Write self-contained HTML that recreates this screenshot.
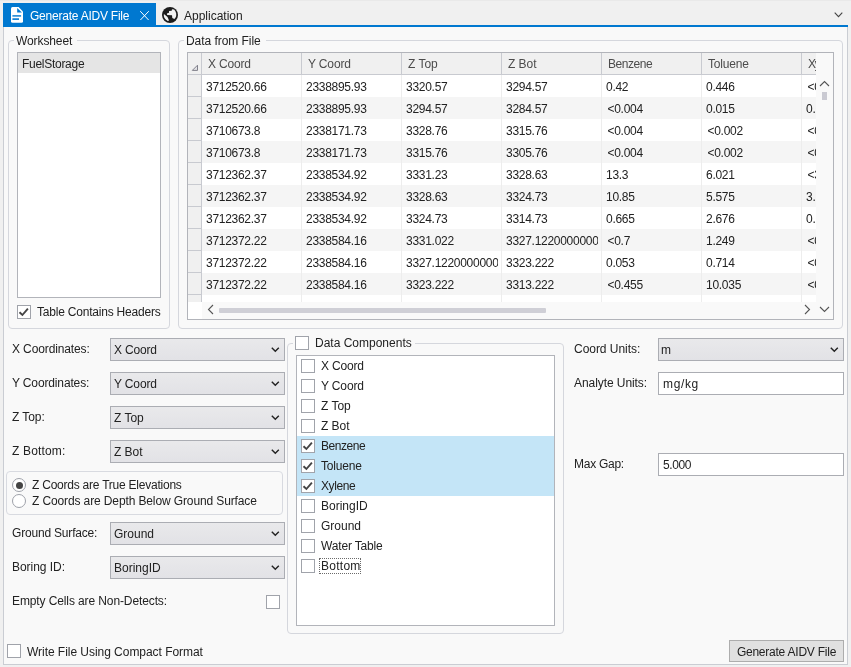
<!DOCTYPE html>
<html><head><meta charset="utf-8"><title>Generate AIDV File</title>
<style>
html,body{margin:0;padding:0}
body{width:851px;height:667px;overflow:hidden;position:relative;background:#f0f0f0;will-change:transform;font-family:"Liberation Sans",sans-serif;font-size:12px;color:#222}
div{box-sizing:border-box}
i{font-style:normal}
.abs,.lab,.cb,.combo,.tbx,.grp,.glab{position:absolute}
.lab{white-space:nowrap;line-height:14px;height:14px}
.cb{width:14px;height:14px;border:1px solid #a0a3aa;background:#fff}
.cb .ck{position:absolute;left:-1px;top:-1px}
.combo{height:23px;border:1px solid #abadb3;background:linear-gradient(#e9e9eb,#e2e2e6)}
.combo span{position:absolute;left:3px;top:4px;line-height:14px;white-space:nowrap}
.combo .ar{position:absolute;right:4.2px;top:8.3px}
.tbx{height:23px;border:1px solid #abadb3;background:#fff}
.tbx span{position:absolute;left:4px;top:4px;line-height:14px;white-space:nowrap}
.grp{border:1px solid #d5d7dd;border-radius:4px}
.glab{background:#f9f9f9;padding:0 5px 0 2px;line-height:14px;white-space:nowrap}
.hc{position:absolute;top:0;height:22px;border-right:1px solid #c8cad0;border-bottom:1px solid #c8cad0;background:#f0f0f0;color:#4c4c4c;line-height:22px;padding-left:6px;white-space:nowrap;overflow:hidden}
.row{position:absolute;left:0;width:630px;height:22px}
.row.alt{background:#f5f5f5}
.rh{position:absolute;left:0;top:0;width:14px;height:22px;background:#f0f0f0;border-right:1px solid #c8cad0;border-bottom:1px solid #c8cad0}
.c{position:absolute;top:0;height:22px;line-height:22px;padding-left:4px;padding-top:0.5px;white-space:nowrap;overflow:hidden;letter-spacing:-0.28px}
.vl{position:absolute;top:22px;width:1px;height:230px;background:#ededed}
.li{position:absolute;left:0;width:257px;height:20px}
.li.sel{background:#c4e5f7}
.li span{position:absolute;left:24px;top:3px;line-height:14px;white-space:nowrap}
.li .fr{position:absolute;left:22px;top:2px;width:42px;height:16px;border:1px dotted #6a6a6a}
</style></head><body>

<div class="abs" style="left:0;top:0;width:851px;height:1px;background:#e9e9e9"></div>
<div class="abs" style="left:3px;top:27px;width:845px;height:638px;background:#f9f9f9;border:1px solid #cacdd3;border-top:none"></div>
<div class="abs" style="left:3px;top:25px;width:845px;height:2px;background:#0078d0"></div>
<div class="abs" style="left:3px;top:3px;width:153px;height:24px;background:#0078d0"></div>
<svg style="position:absolute;left:11px;top:7px" width="12" height="16" viewBox="0 0 12 16"><path d="M1.5 0 H7.6 L12 4.4 V14.3 Q12 15.8 10.5 15.8 H1.5 Q0 15.8 0 14.3 V1.5 Q0 0 1.5 0 Z" fill="#fff"/><path d="M6.2 1 V5.6 H10.9 Z" fill="#0078d0"/><rect x="1.4" y="8.2" width="8.7" height="1.4" fill="#0078d0"/><rect x="1.4" y="11.3" width="6.6" height="1.6" fill="#0078d0"/></svg>
<div class="lab" style="color:#fff;left:30px;top:9px"><i style="letter-spacing:-0.23px">Generate AIDV File</i></div>
<svg style="position:absolute;left:140px;top:11px" width="9" height="9.4" viewBox="0 0 9 9.4"><path d="M0.2 0.2 L8.8 9.2 M8.8 0.2 L0.2 9.2" stroke="#fff" stroke-width="1" fill="none"/></svg>
<svg style="position:absolute;left:162px;top:7px" width="16" height="16" viewBox="0 0 16 16"><circle cx="8" cy="8" r="8" fill="#1c1c1c"/><path d="M10 2.2 L12.1 2.6 Q13.7 4.2 14.2 6.5 Q14.5 8.6 13.6 10.6 L12.4 12.1 L10.3 10.9 L10 8.2 L5.2 7.9 L4.9 6.4 L7 5.8 L7 4 L9.7 3.7 Z" fill="#f2f2f2"/><path d="M1.9 7 L3.1 7.9 L5.5 10 L7 13.6 L5.8 13.9 Q4.2 13.2 3.2 12 Q2 10.5 1.8 9 Z" fill="#f2f2f2"/></svg>
<div class="lab " style="left:184px;top:9px"><i style="letter-spacing:0.00px">Application</i></div>
<svg style="position:absolute;left:834px;top:12px" width="9" height="6" viewBox="0 0 9 6"><path d="M0.7 0.7 L4.5 4.6 L8.3 0.7" fill="none" stroke="#444" stroke-width="1.1"/></svg>
<div class="grp" style="left:8px;top:40px;width:162px;height:289px"></div>
<div class="glab" style="left:14px;top:34px"><i style="letter-spacing:-0.10px">Worksheet</i></div>
<div class="abs" style="left:17px;top:52px;width:144px;height:246px;border:1px solid #b2b4ba;background:#fff"><div class="abs" style="left:0;top:0;width:142px;height:20px;background:#e5e5e5"></div><div class="lab" style="left:4px;top:4px"><i style="letter-spacing:-0.28px">FuelStorage</i></div></div>
<div class="cb" style="left:17px;top:305px"><svg class="ck" viewBox="0 0 14 14" width="14" height="14"><path d="M2.5 7.3 L5.4 10 L10.9 3.7" fill="none" stroke="#444" stroke-width="1.9"/></svg></div>
<div class="lab " style="left:37px;top:305px"><i style="letter-spacing:-0.21px">Table Contains Headers</i></div>
<div class="grp" style="left:178px;top:40px;width:665px;height:289px"></div>
<div class="glab" style="left:184px;top:34px"><i style="letter-spacing:-0.05px">Data from File</i></div>
<div class="abs" style="left:187px;top:52px;width:647px;height:268px;border:1px solid #b2b4ba;background:#fff;overflow:hidden"><div class="abs" style="left:0;top:0;width:628px;height:249px;overflow:hidden"><div class="hc" style="left:0;width:14px;padding:0"></div><div class="hc" style="left:14px;width:100px"><i style="letter-spacing:-0.17px">X Coord</i></div><div class="hc" style="left:114px;width:100px"><i style="letter-spacing:-0.14px">Y Coord</i></div><div class="hc" style="left:214px;width:100px"><i style="letter-spacing:0.00px">Z Top</i></div><div class="hc" style="left:314px;width:100px"><i style="letter-spacing:-0.05px">Z Bot</i></div><div class="hc" style="left:414px;width:100px"><i style="letter-spacing:-0.46px">Benzene</i></div><div class="hc" style="left:514px;width:100px"><i style="letter-spacing:-0.17px">Toluene</i></div><div class="hc" style="left:614px;width:30px"><i style="letter-spacing:-1.30px">Xy</i></div><div class="row" style="top:22px"><div class="rh"></div><div class="c" style="left:14px;width:96px">3712520.66</div><div class="c" style="left:114px;width:96px">2338895.93</div><div class="c" style="left:214px;width:96px">3320.57</div><div class="c" style="left:314px;width:96px">3294.57</div><div class="c" style="left:414px;width:96px">0.42</div><div class="c" style="left:514px;width:96px">0.446</div><div class="c" style="left:614px;width:26px;padding-left:5.5px">&lt;0</div></div><div class="row alt" style="top:44px"><div class="rh"></div><div class="c" style="left:14px;width:96px">3712520.66</div><div class="c" style="left:114px;width:96px">2338895.93</div><div class="c" style="left:214px;width:96px">3294.57</div><div class="c" style="left:314px;width:96px">3284.57</div><div class="c" style="left:414px;width:96px;padding-left:5.5px">&lt;0.004</div><div class="c" style="left:514px;width:96px">0.015</div><div class="c" style="left:614px;width:26px">0.0</div></div><div class="row" style="top:66px"><div class="rh"></div><div class="c" style="left:14px;width:96px">3710673.8</div><div class="c" style="left:114px;width:96px">2338171.73</div><div class="c" style="left:214px;width:96px">3328.76</div><div class="c" style="left:314px;width:96px">3315.76</div><div class="c" style="left:414px;width:96px;padding-left:5.5px">&lt;0.004</div><div class="c" style="left:514px;width:96px;padding-left:5.5px">&lt;0.002</div><div class="c" style="left:614px;width:26px;padding-left:5.5px">&lt;0</div></div><div class="row alt" style="top:88px"><div class="rh"></div><div class="c" style="left:14px;width:96px">3710673.8</div><div class="c" style="left:114px;width:96px">2338171.73</div><div class="c" style="left:214px;width:96px">3315.76</div><div class="c" style="left:314px;width:96px">3305.76</div><div class="c" style="left:414px;width:96px;padding-left:5.5px">&lt;0.004</div><div class="c" style="left:514px;width:96px;padding-left:5.5px">&lt;0.002</div><div class="c" style="left:614px;width:26px;padding-left:5.5px">&lt;0</div></div><div class="row" style="top:110px"><div class="rh"></div><div class="c" style="left:14px;width:96px">3712362.37</div><div class="c" style="left:114px;width:96px">2338534.92</div><div class="c" style="left:214px;width:96px">3331.23</div><div class="c" style="left:314px;width:96px">3328.63</div><div class="c" style="left:414px;width:96px">13.3</div><div class="c" style="left:514px;width:96px">6.021</div><div class="c" style="left:614px;width:26px;padding-left:5.5px">&lt;3</div></div><div class="row alt" style="top:132px"><div class="rh"></div><div class="c" style="left:14px;width:96px">3712362.37</div><div class="c" style="left:114px;width:96px">2338534.92</div><div class="c" style="left:214px;width:96px">3328.63</div><div class="c" style="left:314px;width:96px">3324.73</div><div class="c" style="left:414px;width:96px">10.85</div><div class="c" style="left:514px;width:96px">5.575</div><div class="c" style="left:614px;width:26px">3.2</div></div><div class="row" style="top:154px"><div class="rh"></div><div class="c" style="left:14px;width:96px">3712362.37</div><div class="c" style="left:114px;width:96px">2338534.92</div><div class="c" style="left:214px;width:96px">3324.73</div><div class="c" style="left:314px;width:96px">3314.73</div><div class="c" style="left:414px;width:96px">0.665</div><div class="c" style="left:514px;width:96px">2.676</div><div class="c" style="left:614px;width:26px">0.0</div></div><div class="row alt" style="top:176px"><div class="rh"></div><div class="c" style="left:14px;width:96px">3712372.22</div><div class="c" style="left:114px;width:96px">2338584.16</div><div class="c" style="left:214px;width:96px">3331.022</div><div class="c" style="left:314px;width:96px">3327.12200000001</div><div class="c" style="left:414px;width:96px;padding-left:5.5px">&lt;0.7</div><div class="c" style="left:514px;width:96px">1.249</div><div class="c" style="left:614px;width:26px;padding-left:5.5px">&lt;0</div></div><div class="row" style="top:198px"><div class="rh"></div><div class="c" style="left:14px;width:96px">3712372.22</div><div class="c" style="left:114px;width:96px">2338584.16</div><div class="c" style="left:214px;width:96px">3327.12200000001</div><div class="c" style="left:314px;width:96px">3323.222</div><div class="c" style="left:414px;width:96px">0.053</div><div class="c" style="left:514px;width:96px">0.714</div><div class="c" style="left:614px;width:26px;padding-left:5.5px">&lt;0</div></div><div class="row alt" style="top:220px"><div class="rh"></div><div class="c" style="left:14px;width:96px">3712372.22</div><div class="c" style="left:114px;width:96px">2338584.16</div><div class="c" style="left:214px;width:96px">3323.222</div><div class="c" style="left:314px;width:96px">3313.222</div><div class="c" style="left:414px;width:96px;padding-left:5.5px">&lt;0.455</div><div class="c" style="left:514px;width:96px">10.035</div><div class="c" style="left:614px;width:26px;padding-left:5.5px">&lt;0</div></div><div class="row" style="top:242px"><div class="rh"></div><div class="c" style="left:14px;width:96px"></div><div class="c" style="left:114px;width:96px"></div><div class="c" style="left:214px;width:96px"></div><div class="c" style="left:314px;width:96px"></div><div class="c" style="left:414px;width:96px"></div><div class="c" style="left:514px;width:96px"></div><div class="c" style="left:614px;width:26px"></div></div><div class="vl" style="left:113px"></div><div class="vl" style="left:213px"></div><div class="vl" style="left:313px"></div><div class="vl" style="left:413px"></div><div class="vl" style="left:513px"></div><div class="vl" style="left:613px"></div></div><div class="abs" style="left:628px;top:0;width:17px;height:266px;background:#f9f9f9"></div><div class="abs" style="left:14px;top:249px;width:631px;height:17px;background:#f9f9f9"></div><div class="abs" style="left:31px;top:255px;width:327px;height:5px;background:#cfcfd6;border-radius:1px"></div><div class="abs" style="left:634px;top:39px;width:5px;height:8px;background:#cacad2"></div><svg style="position:absolute;left:630.7px;top:26.6px" width="11" height="7" viewBox="0 0 11 7"><path d="M1 6 L5.5 1.5 L10 6" fill="none" stroke="#555" stroke-width="1.1"/></svg><svg style="position:absolute;left:630.6px;top:253px" width="11" height="7" viewBox="0 0 11 7"><path d="M1 1 L5.5 5.5 L10 1" fill="none" stroke="#555" stroke-width="1.1"/></svg><svg style="position:absolute;left:19px;top:251.2px" width="7" height="11" viewBox="0 0 7 11"><path d="M6 1 L1.5 5.5 L6 10" fill="none" stroke="#555" stroke-width="1.1"/></svg><svg style="position:absolute;left:616px;top:251.2px" width="7" height="11" viewBox="0 0 7 11"><path d="M1 1 L5.5 5.5 L1 10" fill="none" stroke="#555" stroke-width="1.1"/></svg><svg style="position:absolute;left:0;top:0" width="14" height="22" viewBox="0 0 14 22"><path d="M9.5 12.2 V17.4 H4.3 Z" fill="#e2e2e6" stroke="#80808a" stroke-width="1"/></svg></div>
<div class="lab " style="left:12px;top:342px"><i style="letter-spacing:-0.12px">X Coordinates:</i></div>
<div class="combo" style="left:110px;top:338px;width:175px"><span><i style="letter-spacing:-0.17px">X Coord</i></span><svg class="ar" viewBox="0 0 9 6" width="8.6" height="5.7"><path d="M0.8 0.8 L4.5 4.5 L8.2 0.8" fill="none" stroke="#222" stroke-width="1.5"/></svg></div>
<div class="lab " style="left:12px;top:376px"><i style="letter-spacing:-0.14px">Y Coordinates:</i></div>
<div class="combo" style="left:110px;top:372px;width:175px"><span><i style="letter-spacing:-0.14px">Y Coord</i></span><svg class="ar" viewBox="0 0 9 6" width="8.6" height="5.7"><path d="M0.8 0.8 L4.5 4.5 L8.2 0.8" fill="none" stroke="#222" stroke-width="1.5"/></svg></div>
<div class="lab " style="left:12px;top:410px"><i style="letter-spacing:-0.07px">Z Top:</i></div>
<div class="combo" style="left:110px;top:406px;width:175px"><span><i style="letter-spacing:0.00px">Z Top</i></span><svg class="ar" viewBox="0 0 9 6" width="8.6" height="5.7"><path d="M0.8 0.8 L4.5 4.5 L8.2 0.8" fill="none" stroke="#222" stroke-width="1.5"/></svg></div>
<div class="lab " style="left:12px;top:444px"><i style="letter-spacing:0.16px">Z Bottom:</i></div>
<div class="combo" style="left:110px;top:440px;width:175px"><span><i style="letter-spacing:-0.05px">Z Bot</i></span><svg class="ar" viewBox="0 0 9 6" width="8.6" height="5.7"><path d="M0.8 0.8 L4.5 4.5 L8.2 0.8" fill="none" stroke="#222" stroke-width="1.5"/></svg></div>
<div class="lab " style="left:12px;top:526px"><i style="letter-spacing:-0.19px">Ground Surface:</i></div>
<div class="combo" style="left:110px;top:522px;width:175px"><span><i style="letter-spacing:-0.01px">Ground</i></span><svg class="ar" viewBox="0 0 9 6" width="8.6" height="5.7"><path d="M0.8 0.8 L4.5 4.5 L8.2 0.8" fill="none" stroke="#222" stroke-width="1.5"/></svg></div>
<div class="lab " style="left:12px;top:560px"><i style="letter-spacing:-0.03px">Boring ID:</i></div>
<div class="combo" style="left:110px;top:556px;width:175px"><span><i style="letter-spacing:-0.01px">BoringID</i></span><svg class="ar" viewBox="0 0 9 6" width="8.6" height="5.7"><path d="M0.8 0.8 L4.5 4.5 L8.2 0.8" fill="none" stroke="#222" stroke-width="1.5"/></svg></div>
<div class="grp" style="left:6px;top:471px;width:277px;height:44px;border-color:#d8dae0"></div>
<div class="abs" style="left:12px;top:478px;width:14px;height:14px;border:1px solid #9da0a8;border-radius:7px;background:#fff"><div class="abs" style="left:2.5px;top:2.5px;width:7px;height:7px;border-radius:4px;background:#444"></div></div>
<div class="abs" style="left:12px;top:494px;width:14px;height:14px;border:1px solid #9da0a8;border-radius:7px;background:#fff"></div>
<div class="lab " style="left:32px;top:478px"><i style="letter-spacing:-0.23px">Z Coords are True Elevations</i></div>
<div class="lab " style="left:32px;top:494px"><i style="letter-spacing:-0.12px">Z Coords are Depth Below Ground Surface</i></div>
<div class="lab " style="left:12px;top:594px"><i style="letter-spacing:-0.11px">Empty Cells are Non-Detects:</i></div>
<div class="cb" style="left:266px;top:595px"></div>
<div class="cb" style="left:7px;top:644px"></div>
<div class="lab " style="left:27px;top:645px"><i style="letter-spacing:-0.04px">Write File Using Compact Format</i></div>
<div class="grp" style="left:287px;top:343px;width:277px;height:291px"></div>
<div class="glab" style="left:293px;top:336px;width:122px;height:15px"></div>
<div class="cb" style="left:295px;top:336px"></div>
<div class="lab " style="left:315px;top:336px"><i>Data Components</i></div>
<div class="abs" style="left:296px;top:355px;width:259px;height:271px;border:1px solid #b2b4ba;background:#fff"><div class="li" style="top:0px"><div class="cb" style="left:4px;top:3px"></div><span><i style="letter-spacing:-0.17px">X Coord</i></span></div><div class="li" style="top:20px"><div class="cb" style="left:4px;top:3px"></div><span><i style="letter-spacing:-0.14px">Y Coord</i></span></div><div class="li" style="top:40px"><div class="cb" style="left:4px;top:3px"></div><span><i style="letter-spacing:0.00px">Z Top</i></span></div><div class="li" style="top:60px"><div class="cb" style="left:4px;top:3px"></div><span><i style="letter-spacing:-0.05px">Z Bot</i></span></div><div class="li sel" style="top:80px"><div class="cb" style="left:4px;top:3px"><svg class="ck" viewBox="0 0 14 14" width="14" height="14"><path d="M2.5 7.3 L5.4 10 L10.9 3.7" fill="none" stroke="#444" stroke-width="1.9"/></svg></div><span><i style="letter-spacing:-0.46px">Benzene</i></span></div><div class="li sel" style="top:100px"><div class="cb" style="left:4px;top:3px"><svg class="ck" viewBox="0 0 14 14" width="14" height="14"><path d="M2.5 7.3 L5.4 10 L10.9 3.7" fill="none" stroke="#444" stroke-width="1.9"/></svg></div><span><i style="letter-spacing:-0.17px">Toluene</i></span></div><div class="li sel" style="top:120px"><div class="cb" style="left:4px;top:3px"><svg class="ck" viewBox="0 0 14 14" width="14" height="14"><path d="M2.5 7.3 L5.4 10 L10.9 3.7" fill="none" stroke="#444" stroke-width="1.9"/></svg></div><span><i style="letter-spacing:-0.38px">Xylene</i></span></div><div class="li" style="top:140px"><div class="cb" style="left:4px;top:3px"></div><span><i style="letter-spacing:-0.01px">BoringID</i></span></div><div class="li" style="top:160px"><div class="cb" style="left:4px;top:3px"></div><span><i style="letter-spacing:-0.01px">Ground</i></span></div><div class="li" style="top:180px"><div class="cb" style="left:4px;top:3px"></div><span><i style="letter-spacing:-0.17px">Water Table</i></span></div><div class="li" style="top:200px"><div class="cb" style="left:4px;top:3px"></div><span><i style="letter-spacing:0.26px">Bottom</i></span><div class="fr"></div></div></div>
<div class="lab " style="left:574px;top:342px"><i style="letter-spacing:-0.04px">Coord Units:</i></div>
<div class="combo" style="left:658px;top:338px;width:186px"><span style="margin-left:-1px"><i>m</i></span><svg class="ar" viewBox="0 0 9 6" width="8.6" height="5.7"><path d="M0.8 0.8 L4.5 4.5 L8.2 0.8" fill="none" stroke="#222" stroke-width="1.5"/></svg></div>
<div class="lab " style="left:574px;top:376px"><i style="letter-spacing:-0.07px">Analyte Units:</i></div>
<div class="tbx" style="left:658px;top:372px;width:186px"><span><i style="letter-spacing:0.63px">mg/kg</i></span></div>
<div class="lab " style="left:574px;top:457px"><i style="letter-spacing:-0.26px">Max Gap:</i></div>
<div class="tbx" style="left:658px;top:453px;width:186px"><span><i style="letter-spacing:-0.41px">5.000</i></span></div>
<div class="abs" style="left:729px;top:640px;width:115px;height:22px;border:1px solid #adadad;background:#e1e1e1;text-align:center;padding-top:1px;line-height:20px;white-space:nowrap"><i style="letter-spacing:-0.23px">Generate AIDV File</i></div>
</body></html>
